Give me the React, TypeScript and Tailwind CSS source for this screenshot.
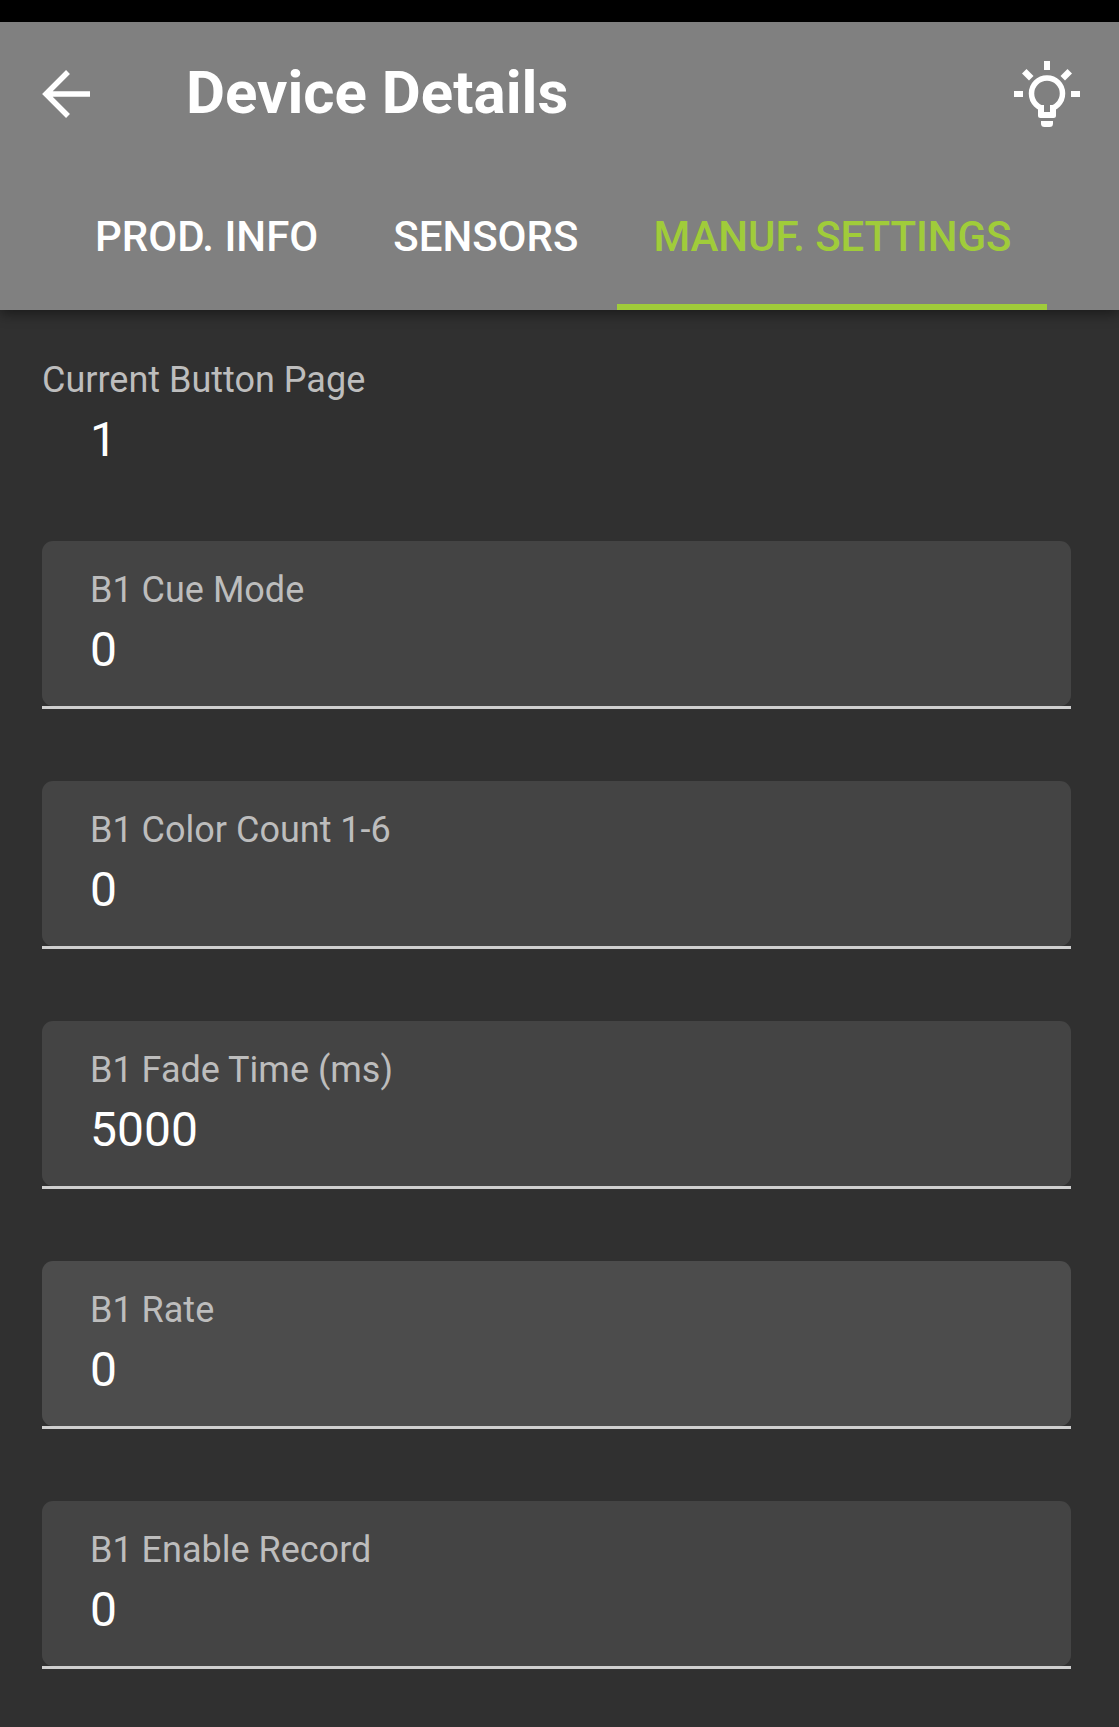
const fields = [
  { label: "B1 Cue Mode", value: "0", hovered: false },
  { label: "B1 Color Count 1-6", value: "0", hovered: false },
  { label: "B1 Fade Time (ms)", value: "5000", hovered: false },
  { label: "B1 Rate", value: "0", hovered: true },
  { label: "B1 Enable Record", value: "0", hovered: false },
];

function BulbIcon() {
  return (
    <svg width="66" height="66" viewBox="0 0 66 66" fill="none" aria-hidden="true">
      <circle cx="33" cy="32.500" r="15.500" stroke="white" strokeWidth="5.500" />
      <path d="M24 44h18v10.500a2.500 2.500 0 0 1-2.500 2.500h-13a2.500 2.500 0 0 1-2.500-2.500z" fill="white" />
      <path d="M30 42h6v9h-6z" fill="#808080" />
      <path d="M27 60h12v2.500a3.500 3.500 0 0 1-3.500 3.500h-5a3.500 3.500 0 0 1-3.500-3.500z" fill="white" />
      <rect x="30" y="0" width="6" height="9" fill="white" />
      <rect x="0" y="30" width="9" height="6" fill="white" />
      <rect x="57" y="30" width="9" height="6" fill="white" />
      <path d="M8 12.500l4.500-4.500 7 7-4.500 4.500z" fill="white" />
      <path d="M58 12.500l-4.500-4.500-7 7 4.500 4.500z" fill="white" />
    </svg>
  );
}

function BackIcon() {
  return (
    <svg width="50" height="50" viewBox="0 0 50 50" fill="none" aria-hidden="true">
      <path d="M49 25H6M27 3L5 25l22 22" stroke="white" strokeWidth="5.500" />
    </svg>
  );
}

export default function App() {
  return (
    <div className="w-[1119px] h-[1727px] overflow-hidden bg-[#303030] font-['Roboto',sans-serif]">
      <div className="h-[22px] bg-black" />
      <header className="relative h-[288px] bg-[#808080] flex flex-col shadow-[0_4px_12px_rgba(0,0,0,0.45)]">
        <div className="h-[142px] flex items-center pl-[41px] pr-[39px]">
          <div className="mt-[2px]">
            <BackIcon />
          </div>
          <h1 className="ml-[95px] text-[60px] font-bold leading-none text-white">Device Details</h1>
          <div className="ml-auto mt-[2px]">
            <BulbIcon />
          </div>
        </div>
        <nav className="mt-auto flex gap-[3px] pl-[59px] h-[146px]">
          {["PROD. INFO", "SENSORS", "MANUF. SETTINGS"].map((t, i) => (
            <div
              key={t}
              className={
                i === 2
                  ? "w-[430px] justify-center whitespace-nowrap tracking-[-0.1px] pt-[5px] flex items-center border-b-[6px] border-[#a0cc3a] text-[#a0cc3a] text-[42px] font-medium"
                  : "px-[36px] pt-[5px] flex items-center border-b-[6px] border-transparent text-white text-[42px] font-medium"
              }
            >
              {t}
            </div>
          ))}
        </nav>
      </header>
      <main className="pl-[42px] pr-[48px]">
        <section className="pt-[50px] h-[231px]">
          <div className="text-[36px] leading-[40px] text-[#bdbdbd]">Current Button Page</div>
          <div className="pl-[48px] mt-[12px] text-[48px] leading-[56px] text-white">1</div>
        </section>
        <div className="flex flex-col gap-[72px]">
          {fields.map((f) => (
            <div key={f.label} className="h-[168px] border-b-[3px] border-[#cfcfcf]">
              <div
                className={
                  f.hovered
                    ? "h-full rounded-[11px] bg-[#4c4c4c] pl-[48px] pt-[29px]"
                    : "h-full rounded-[11px] bg-[#444444] pl-[48px] pt-[29px]"
                }
              >
                <div className="text-[36px] leading-[40px] text-[#bdbdbd]">{f.label}</div>
                <div className="mt-[12px] text-[48px] leading-[56px] text-white">{f.value}</div>
              </div>
            </div>
          ))}
        </div>
      </main>
    </div>
  );
}
